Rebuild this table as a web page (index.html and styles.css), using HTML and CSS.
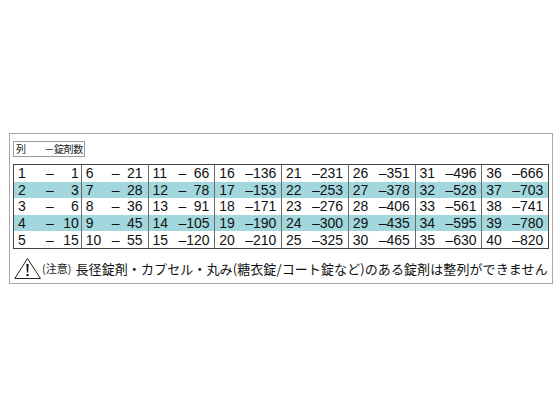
FILE: index.html
```html
<!DOCTYPE html>
<html lang="ja">
<head>
<meta charset="utf-8">
<link rel="stylesheet" href="styles.css">
</head>
<body>
<div class="panel">
  <div class="legend"><span>列</span><span class="legend-rest">－錠剤数</span></div>
  <div class="grid">
    <div class="row">
      <div class="cell"><span class="a">1</span><span class="d">–</span><span class="b">1</span></div>
      <div class="cell"><span class="a">6</span><span class="d">–</span><span class="b">21</span></div>
      <div class="cell"><span class="a">11</span><span class="d">–</span><span class="b">66</span></div>
      <div class="cell"><span class="a">16</span><span class="d">–</span><span class="b">136</span></div>
      <div class="cell"><span class="a">21</span><span class="d">–</span><span class="b">231</span></div>
      <div class="cell"><span class="a">26</span><span class="d">–</span><span class="b">351</span></div>
      <div class="cell"><span class="a">31</span><span class="d">–</span><span class="b">496</span></div>
      <div class="cell"><span class="a">36</span><span class="d">–</span><span class="b">666</span></div>
    </div>
    <div class="row alt">
      <div class="cell"><span class="a">2</span><span class="d">–</span><span class="b">3</span></div>
      <div class="cell"><span class="a">7</span><span class="d">–</span><span class="b">28</span></div>
      <div class="cell"><span class="a">12</span><span class="d">–</span><span class="b">78</span></div>
      <div class="cell"><span class="a">17</span><span class="d">–</span><span class="b">153</span></div>
      <div class="cell"><span class="a">22</span><span class="d">–</span><span class="b">253</span></div>
      <div class="cell"><span class="a">27</span><span class="d">–</span><span class="b">378</span></div>
      <div class="cell"><span class="a">32</span><span class="d">–</span><span class="b">528</span></div>
      <div class="cell"><span class="a">37</span><span class="d">–</span><span class="b">703</span></div>
    </div>
    <div class="row">
      <div class="cell"><span class="a">3</span><span class="d">–</span><span class="b">6</span></div>
      <div class="cell"><span class="a">8</span><span class="d">–</span><span class="b">36</span></div>
      <div class="cell"><span class="a">13</span><span class="d">–</span><span class="b">91</span></div>
      <div class="cell"><span class="a">18</span><span class="d">–</span><span class="b">171</span></div>
      <div class="cell"><span class="a">23</span><span class="d">–</span><span class="b">276</span></div>
      <div class="cell"><span class="a">28</span><span class="d">–</span><span class="b">406</span></div>
      <div class="cell"><span class="a">33</span><span class="d">–</span><span class="b">561</span></div>
      <div class="cell"><span class="a">38</span><span class="d">–</span><span class="b">741</span></div>
    </div>
    <div class="row alt">
      <div class="cell"><span class="a">4</span><span class="d">–</span><span class="b">10</span></div>
      <div class="cell"><span class="a">9</span><span class="d">–</span><span class="b">45</span></div>
      <div class="cell"><span class="a">14</span><span class="d">–</span><span class="b">105</span></div>
      <div class="cell"><span class="a">19</span><span class="d">–</span><span class="b">190</span></div>
      <div class="cell"><span class="a">24</span><span class="d">–</span><span class="b">300</span></div>
      <div class="cell"><span class="a">29</span><span class="d">–</span><span class="b">435</span></div>
      <div class="cell"><span class="a">34</span><span class="d">–</span><span class="b">595</span></div>
      <div class="cell"><span class="a">39</span><span class="d">–</span><span class="b">780</span></div>
    </div>
    <div class="row">
      <div class="cell"><span class="a">5</span><span class="d">–</span><span class="b">15</span></div>
      <div class="cell"><span class="a">10</span><span class="d">–</span><span class="b">55</span></div>
      <div class="cell"><span class="a">15</span><span class="d">–</span><span class="b">120</span></div>
      <div class="cell"><span class="a">20</span><span class="d">–</span><span class="b">210</span></div>
      <div class="cell"><span class="a">25</span><span class="d">–</span><span class="b">325</span></div>
      <div class="cell"><span class="a">30</span><span class="d">–</span><span class="b">465</span></div>
      <div class="cell"><span class="a">35</span><span class="d">–</span><span class="b">630</span></div>
      <div class="cell"><span class="a">40</span><span class="d">–</span><span class="b">820</span></div>
    </div>
  </div>
  <div class="note">
    <svg class="warn" width="28" height="24" viewBox="0 0 28 24">
      <path d="M13.5 1.5 L26.5 21.5 L0.8 21.5 Z" fill="none" stroke="#222" stroke-width="1"/>
      <path d="M12.4 7 L14.6 7 L14.1 15.5 L12.9 15.5 Z" fill="#111"/>
      <rect x="12.5" y="17" width="2" height="2.2" fill="#111"/>
    </svg>
    <span class="caution">(注意)</span>
    <span class="msg">長径錠剤・カプセル・丸み(糖衣錠/コート錠など)のある錠剤は整列ができません</span>
  </div>
</div>
</body>
</html>
```

FILE: styles.css
```css
html, body {
  margin: 0;
  padding: 0;
  background: #ffffff;
}

body {
  width: 560px;
  height: 420px;
  font-family: "Liberation Sans", "Noto Sans CJK JP", sans-serif;
  color: #111;
}

.panel {
  margin: 133px 0 0 9px;
  width: 536px;
  height: 149px;
  padding: 0 3px;
  border: 1px solid #a8a8a8;
  display: flex;
  flex-direction: column;
}

.legend {
  margin-top: 7px;
  width: 68px;
  height: 14px;
  border: 1px solid #9a9a9a;
  display: flex;
  align-items: center;
  padding-left: 2px;
  font-family: "Noto Sans CJK JP", sans-serif;
  font-size: 10px;
  line-height: 1;
  color: #222;
}

.legend-rest {
  margin-left: auto;
  margin-right: 1px;
  letter-spacing: -0.3px;
}

.grid {
  margin-top: 7px;
  border: 1px solid #444;
  display: flex;
  flex-direction: column;
}

.row {
  display: grid;
  grid-template-columns: repeat(8, minmax(0, 1fr));
  height: 16.6px;
}

.row.alt {
  background: #a2d7de;
}

.cell {
  display: grid;
  grid-template-columns: 26px auto minmax(0, 1fr);
  align-items: center;
  padding: 0 5px 0 4px;
  border-left: 1px solid #6a6a6a;
  font-size: 14px;
  line-height: 1;
  white-space: nowrap;
}

.cell:first-child {
  border-left: none;
  padding-right: 2px;
  grid-template-columns: 28px auto minmax(0, 1fr);
}

.cell .b {
  text-align: right;
}

.note {
  margin-top: 8px;
  display: flex;
  align-items: center;
  font-family: "Noto Sans CJK JP", sans-serif;
  line-height: 1;
  white-space: nowrap;
}

.warn {
  flex: none;
  margin-left: 1px;
}

.caution {
  font-size: 11px;
  color: #222;
}

.msg {
  font-size: 13px;
  margin-left: 4px;
  letter-spacing: 0.1px;
}
```
